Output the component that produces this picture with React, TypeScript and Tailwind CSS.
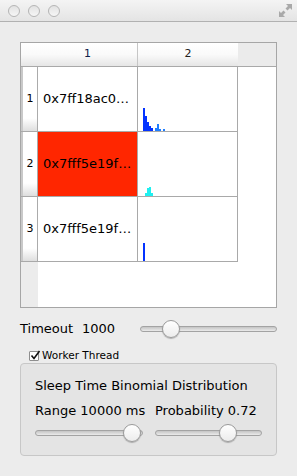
import React from "react";

type Bar = { x: number; h: number; c: string };

const DARK = "#0433ff";
const LIGHT = "#1f7eff";
const CYAN = "#1ff0f0";

const rows: { label: string; text: string; red?: boolean; bars: Bar[] }[] = [
  {
    label: "1",
    text: "0x7ff18ac0…",
    bars: [
      { x: 5, h: 23, c: DARK },
      { x: 7, h: 15, c: DARK },
      { x: 9, h: 9, c: DARK },
      { x: 11, h: 5, c: DARK },
      { x: 13, h: 3, c: DARK },
      { x: 17, h: 3, c: LIGHT },
      { x: 19, h: 7, c: LIGHT },
      { x: 21, h: 2, c: LIGHT },
      { x: 25, h: 2, c: LIGHT },
    ],
  },
  {
    label: "2",
    text: "0x7fff5e19f…",
    red: true,
    bars: [
      { x: 7, h: 3, c: CYAN },
      { x: 9, h: 8, c: CYAN },
      { x: 11, h: 9, c: CYAN },
      { x: 13, h: 3, c: CYAN },
    ],
  },
  {
    label: "3",
    text: "0x7fff5e19f…",
    bars: [{ x: 5, h: 18, c: DARK }],
  },
];

function Histogram({ bars }: { bars: Bar[] }) {
  return (
    <svg width="99" height="64" className="block">
      {bars.map((b, i) => (
        <rect key={i} x={b.x} y={64 - b.h} width={2} height={b.h} fill={b.c} />
      ))}
    </svg>
  );
}

function Slider({ width, thumb }: { width: number; thumb: number }) {
  return (
    <div className="relative h-[18px]" style={{ width }}>
      <div className="absolute left-0 right-0 top-[6px] h-[6px] rounded-full border border-[#a3a3a3] bg-gradient-to-b from-[#c4c4c4] to-[#ebebeb]" />
      <div
        className="absolute top-0 h-[18px] w-[18px] rounded-full border border-[#9b9b9b] bg-gradient-to-b from-white to-[#ececec] shadow-[0_1px_1px_rgba(0,0,0,0.25)]"
        style={{ left: thumb - 9 }}
      />
    </div>
  );
}

function Light() {
  return (
    <div className="h-[12px] w-[12px] rounded-full border border-[#b5b5b5] bg-gradient-to-b from-[#e2e2e2] to-[#f6f6f6]" />
  );
}

export default function App() {
  return (
    <div
      className="w-[297px] h-[476px] bg-[#ececec] text-black overflow-hidden"
      style={{ fontFamily: '"DejaVu Sans", "Lucida Grande", sans-serif' }}
    >
      {/* title bar */}
      <div className="relative h-[22px] border-b border-[#b1b1b1] bg-gradient-to-b from-[#f4f4f4] to-[#e4e4e4] flex items-center pl-[8px] gap-[8px]">
        <Light />
        <Light />
        <Light />
        <svg className="absolute right-[4px] top-[3px]" width="15" height="15" viewBox="0 0 15 15">
          <path d="M8 1 H14 V7 L12 5 L9.5 7.5 L7.5 5.5 L10 3 Z" fill="#a9a9a9" />
          <path d="M7 14 H1 V8 L3 10 L5.5 7.5 L7.5 9.5 L5 12 Z" fill="#a9a9a9" />
        </svg>
      </div>

      <div className="px-[20px] pt-[20px]">
        {/* table */}
        <div className="h-[266px] border border-[#a6a6a6] bg-white flex flex-col">
          <div className="h-[24px] flex border-b border-[#a9a9a9] bg-[#ebebeb] text-[11px]">
            <div className="w-[217px] flex bg-gradient-to-b from-white via-[#fafafa] to-[#e6e6e6]">
              <div className="w-[17px]" />
              <div className="w-[100px] flex items-center justify-center border-r border-[#c6c6c6] text-[#10204a]">1</div>
              <div className="flex-1 flex items-center justify-center text-[#202020]">2</div>
            </div>
          </div>

          {rows.map((r) => (
            <div key={r.label} className="h-[65px] flex">
              <div className="w-[217px] flex border-b border-[#a9a9a9]">
                <div className="w-[17px] flex items-center justify-center border-r border-[#ababab] border-l-[2px] border-l-[#c9c9c9] bg-gradient-to-b from-white via-white via-80% to-[#dedede] text-[11px]">
                  {r.label}
                </div>
                <div
                  className={`w-[100px] flex items-center pl-[5px] border-r border-[#a9a9a9] text-[13px] whitespace-nowrap ${
                    r.red ? "bg-[#ff2600]" : "bg-white"
                  }`}
                >
                  {r.text}
                </div>
                <div className="w-[100px] border-r border-[#a9a9a9] flex items-end">
                  <Histogram bars={r.bars} />
                </div>
              </div>
            </div>
          ))}

          <div className="flex-1 flex">
            <div className="w-[17px] bg-[#ececec]" />
          </div>
        </div>

        {/* timeout */}
        <div className="mt-[11px] h-[20px] flex items-center text-[13px]">
          <span className="w-[62px]">Timeout</span>
          <span>1000</span>
          <div className="ml-auto">
            <Slider width={137} thumb={31} />
          </div>
        </div>

        {/* checkbox */}
        <div className="mt-[10px] h-[14px] flex items-center pl-[9px] gap-[3px] text-[10.5px]">
          <div className="relative h-[10px] w-[10px] border border-[#8e8e8e] bg-white rounded-[1px]">
            <svg className="absolute -top-[2px] left-0" width="11" height="11" viewBox="0 0 11 11">
              <path d="M1.5 5.5 L4 8.5 L9.5 1" stroke="#111" strokeWidth="1.6" fill="none" />
            </svg>
          </div>
          <span>Worker Thread</span>
        </div>

        {/* group box */}
        <div className="h-[93px] rounded-[4px] border border-[#c7c7c7] bg-[#e4e4e4] pl-[14px] pt-[14px] text-[13px]">
          <div className="h-[16px] leading-[16px]">Sleep Time Binomial Distribution</div>
          <div className="mt-[9px] h-[16px] leading-[16px] flex">
            <span className="w-[120px]">Range 10000 ms</span>
            <span>Probability 0.72</span>
          </div>
          <div className="mt-[5px] flex">
            <div className="w-[120px]">
              <Slider width={108} thumb={97} />
            </div>
            <Slider width={107} thumb={73} />
          </div>
        </div>
      </div>
    </div>
  );
}
